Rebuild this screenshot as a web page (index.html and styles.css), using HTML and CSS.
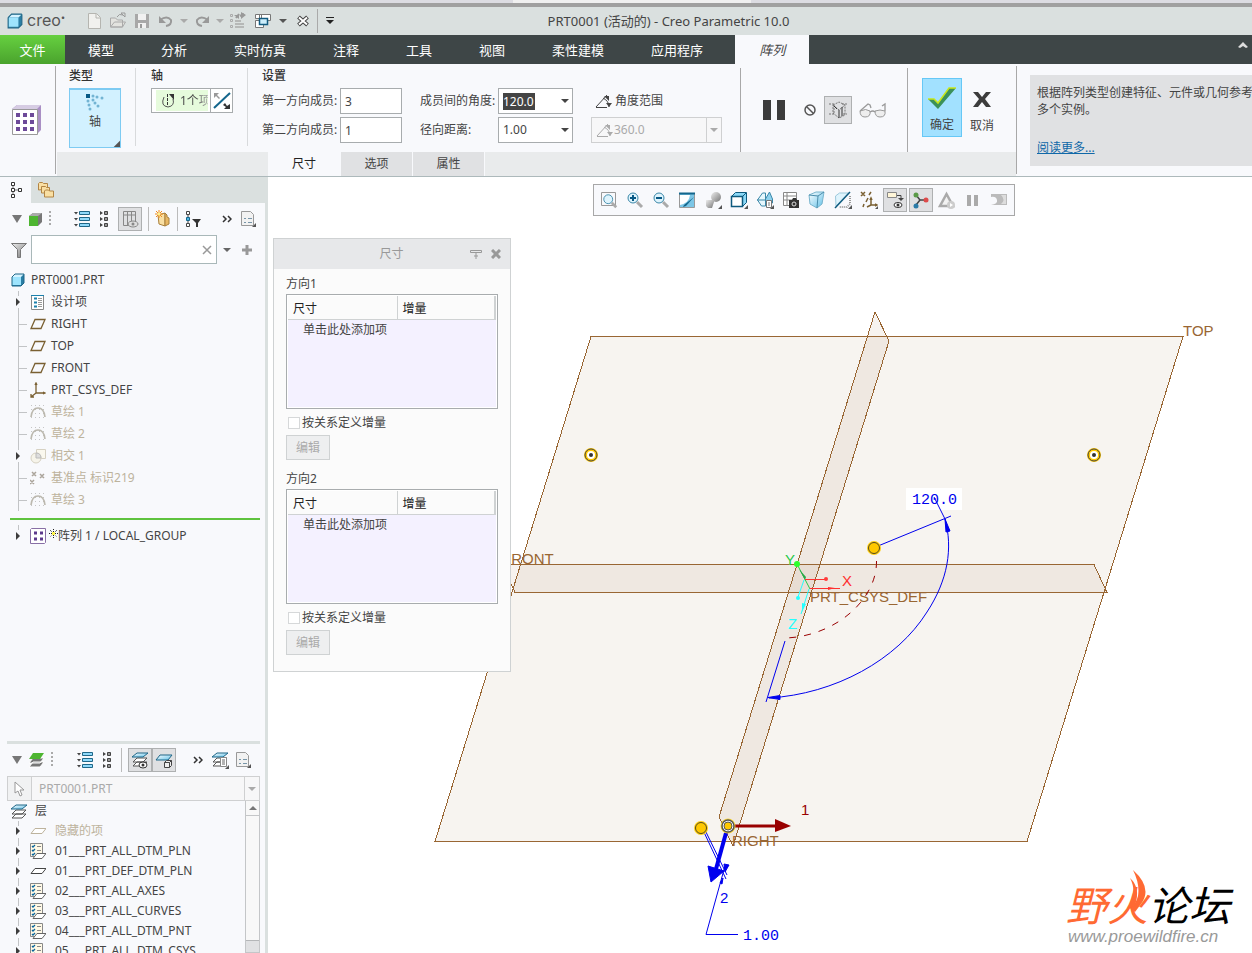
FILE: index.html
```html
<!DOCTYPE html>
<html lang="zh-CN">
<head>
  <meta charset="UTF-8" />
  <meta name="viewport" content="width=device-width, initial-scale=1.0"/>
  <title>PRT0001 (活动的) - Creo Parametric 10.0</title>
  <link rel="stylesheet" href="styles.css">
</head>
<body>
  <!-- shared icons -->
  <svg class="defs" width="0" height="0" aria-hidden="true">
    <linearGradient id="ice" x1="0" y1="0" x2="1" y2="1"><stop offset="0" stop-color="#fff"/><stop offset="1" stop-color="#5fc0e8"/></linearGradient>
    <linearGradient id="grayfade" x1="0" y1="0" x2="1" y2="1"><stop offset="0" stop-color="#eee"/><stop offset="1" stop-color="#777"/></linearGradient>
    <symbol id="i-part" viewBox="0 0 16 16"><path d="M2 5l3-3h9v9l-3 3H2z" fill="#2b7fa5"/><path d="M2 5l3-3h9l-3 3z" fill="#d5f3ff"/><path d="M2 5h9v8H2z" fill="#9ee4fd"/><path d="M2 5v9h9l3-3V2M2 5l3-3h9" fill="none" stroke="#1f6788"/></symbol>
    <symbol id="i-plane" viewBox="0 0 16 16"><path d="M5 3.5h10l-4 9H1z" fill="none" stroke="#7a6032" stroke-width="1.3"/></symbol>
    <symbol id="i-csys" viewBox="0 0 16 16"><path d="M6 1v10h9M6 11l-5 4M5 3l1-2 1 2M13 10l2 1-2 1M1 12v3h3" fill="none" stroke="#7a6032" stroke-width="1.3"/></symbol>
    <symbol id="i-sketch" viewBox="0 0 16 16"><path d="M1 1.5h14M1 5.5h14M1 9.5h14M1 13.5h14" stroke="#c5c5c5" stroke-dasharray="1 3"/><path d="M1 13q1-9 7-9t7 9" fill="none" stroke="#bbb8ae" stroke-width="1.6"/></symbol>
    <symbol id="i-expand" viewBox="0 0 16 16"><path d="M0 1h4L2 3.500zM0 7h4L2 9.500zM0 13h4L2 15.500z" fill="#444"/><path d="M5.500 .5h10v3h-10zM5.500 6.500h10v3h-10zM5.500 12.500h10v3h-10z" fill="#8fd9fa" stroke="#1f6788"/></symbol>
    <symbol id="i-collapse" viewBox="0 0 16 16"><path d="M4 0l3 2-3 2zM4 6l3 2-3 2zM4 12l3 2-3 2z" fill="#444"/><path d="M8.500 .5h3v3h-3zM8.500 6.500h3v3h-3zM8.500 12.500h3v3h-3z" fill="#999" stroke="#444"/></symbol>
    <symbol id="i-doc" viewBox="0 0 16 18"><path d="M1.500 1.500h9l3 3v11h-12z" fill="#f2f2f2" stroke="#999"/><path d="M4 8.500h2M4 12.500h2M8 8.500h4M8 12.500h4" stroke="#7795a8"/><path d="M16 13v4h-4z" fill="#555"/></symbol>
    <symbol id="i-layers" viewBox="0 0 18 16"><path d="M6 11h10l-4 4H2zM6 7h10l-4 4H2z" fill="#fff" stroke="#555"/><path d="M6 2h11l-5 4H1z" fill="url(#ice)" stroke="#1f6788"/></symbol>
    <symbol id="i-layerrow" viewBox="0 0 16 16"><path d="M.5 .5h12v13H.5z" fill="#fff9e6" stroke="#888"/><path d="M2 3l1 1 2-2M2 7l1 1 2-2M2 11l1 1 2-2" fill="none" stroke="#0a659c" stroke-width="1.3"/><path d="M7 3.500h4M7 7.500h4" stroke="#888"/><path d="M7 10.500h9l-4 5H3z" fill="#fff" stroke="#666"/></symbol>
    <symbol id="i-flat" viewBox="0 0 16 16"><path d="M5 5.500h11l-4 5H1z" fill="#fff" stroke="currentColor"/></symbol>
    <symbol id="i-down" viewBox="0 0 8 8"><path d="M0 2h8L4 6z" fill="currentColor"/></symbol>
    <symbol id="i-right" viewBox="0 0 6 8"><path d="M1 0l4 4-4 4z" fill="#3d3d3d"/></symbol>
    <symbol id="i-angle" viewBox="0 0 18 16"><path d="M1 14.500h11M1 14L12 2M8 5q6 3 6 9" fill="none" stroke="currentColor"/><path d="M9 3h5v5zM11 10h6l-3 4z" fill="currentColor"/></symbol>
    <symbol id="i-more" viewBox="0 0 10 8"><path d="M1 1l3 3-3 3M6 1l3 3-3 3" fill="none" stroke="#333" stroke-width="1.500"/></symbol>
    <symbol id="i-grip" viewBox="0 0 4 16"><path d="M1 0h2v2H1zM1 4h2v2H1zM1 8h2v2H1zM1 12h2v2H1z" fill="#aaa"/></symbol>
    <symbol id="i-lens" viewBox="0 0 18 18"><path d="M11 11l5 5" stroke="#aaa" stroke-width="3"/><circle cx="7" cy="7" r="5" fill="#dff4fd" stroke="#3a87a8"/></symbol>
  </svg>

  <div class="strip"></div>
  <header class="titlebar">
    <div class="logo"><svg width="16" height="16" viewBox="1 1 14 14"><use href="#i-part" width="16" height="16"/></svg><span>creo<sup>•</sup></span></div>
    <div class="quick">
      <button aria-label="新建"><svg width="16" height="18"><path d="M2.500 1.500h8l4 4v11h-12z" fill="#f1f1ee" stroke="#b5b5b0"/><path d="M10 2v4h4" fill="none" stroke="#b5b5b0"/></svg></button>
      <button aria-label="打开"><svg width="18" height="18"><path d="M1.500 15V6h5l2 2h5v7zM1.500 15l4-5h11l-3 5z" fill="#e3e3df" stroke="#aaa"/><path d="M8 5q2-4 6-2M12 1h4v4z" fill="none" stroke="#999"/></svg></button>
      <button aria-label="保存"><svg width="16" height="18"><path d="M1 2h14v14H1z" fill="#a8a8a8"/><path d="M4 2h8v6H4zM4 11h8v5H4z" fill="#f1f1f1"/><path d="M6 12h2v4H6z" fill="#999"/></svg></button>
      <button aria-label="撤消"><svg width="18" height="16"><path d="M3 7q7-5 11 0 1 5-5 6" fill="none" stroke="#999" stroke-width="2"/><path d="M2 3v7h7z" fill="#999"/></svg></button>
      <svg class="pale" width="8" height="8"><use href="#i-down"/></svg>
      <button aria-label="重做"><svg width="18" height="16"><path d="M15 7Q8 2 4 7q-1 5 5 6" fill="none" stroke="#999" stroke-width="2"/><path d="M16 3v7H9z" fill="#999"/></svg></button>
      <svg class="pale" width="8" height="8"><use href="#i-down"/></svg>
      <button aria-label="重新生成"><svg width="18" height="18"><path d="M1.500 2.500h2v2h-2zM1.500 7.500h2v2h-2zM1.500 13.500h2v2h-2z" fill="none" stroke="#aaa"/><path d="M6 9h6M6 12h9M6 15h9" stroke="#aaa" stroke-width="1.500"/><path d="M7 6l3-4M11 4l4-2" stroke="#999" stroke-width="2"/><path d="M5 3h5v4zM12 0l5 3-5 4z" fill="#999"/></svg></button>
      <button aria-label="窗口"><svg width="18" height="18"><path d="M5.500 2.500h11v6h-11zM1.500 8.500h8v7h-8zM1.500 2.500h6v4h-6z" fill="#fff" stroke="#777"/><path d="M5.500 6.500h8v6h-8z" fill="#cdeefb" stroke="#125b80" stroke-width="1.500"/></svg></button>
      <svg width="8" height="8"><use href="#i-down"/></svg>
      <button class="close-win" aria-label="关闭"><svg width="14" height="14"><path d="M2.500 3l9 8M11.500 3l-9 8" stroke="#444" stroke-width="4"/><path d="M3 3.500l8 7M11 3.500l-8 7" stroke="#fff" stroke-width="2"/></svg></button>
      <i class="sep"></i>
      <svg width="10" height="12"><path d="M1 2.500h8" stroke="#222"/><path d="M1 5h8L5 9z" fill="#222"/></svg>
    </div>
    <h1>PRT0001 (活动的) - Creo Parametric 10.0</h1>
  </header>

  <nav class="menu">
    <button class="file">文件</button>
    <button>模型</button>
    <button>分析</button>
    <button>实时仿真</button>
    <button>注释</button>
    <button>工具</button>
    <button>视图</button>
    <button>柔性建模</button>
    <button>应用程序</button>
    <button class="current">阵列</button>
    <svg class="fold" width="12" height="8"><path d="M1 6l5-5 5 5-2 1-3-2-3 2z" fill="#ddd"/></svg>
  </nav>

  <section class="ribbon">
    <div class="ribbon-icon">
      <svg width="32" height="32"><path d="M1 5l5-4h24v25l-4 4V5z" fill="#a98fc4"/><path d="M1 5l5-4h24l-4 4z" fill="#d6cce3"/><path d="M1.500 5.500h25v25h-25z" fill="#fff" stroke="#999"/><path d="M5 11h18M5 18h18M5 25h18" stroke="#6d4a99" stroke-width="4" stroke-dasharray="4 3"/></svg>
    </div>
    <div class="ribbon-body">
      <div class="groups">
        <div class="group type">
          <h2>类型</h2>
          <button class="type-btn"><svg width="20" height="20"><g fill="#73b4d3"><circle cx="8" cy="3" r="1.500"/><circle cx="12" cy="4" r="1.500"/><circle cx="17" cy="5" r="1.500"/><circle cx="3" cy="8" r="1.500"/><circle cx="8" cy="7" r="1.500"/><circle cx="10" cy="10" r="1.500"/><circle cx="13" cy="13" r="1.500"/><circle cx="4" cy="12" r="1.500"/><circle cx="5" cy="16" r="1.500"/></g><path d="M1 1h4v4H1z" fill="#075985"/></svg><span>轴</span></button>
        </div>
        <div class="group axis">
          <h2>轴</h2>
          <div class="collector">
            <button class="picked"><svg width="16" height="16"><path d="M4 4q-4 9 4 10 7-1 5-8" fill="none" stroke="#555"/><path d="M7.500 1v11" stroke="#333" stroke-dasharray="3 1"/><path d="M9 1h5v6z" fill="#333"/></svg><span>1个项</span></button>
            <button class="flip" aria-label="反向"><svg width="20" height="20"><path d="M2 17L18 2" stroke="#14668c" stroke-width="2"/><path d="M2 2h5L5 4l3 3-1 1-3-3-2 2z" fill="#999"/><path d="M18 18h-6l2-2-3-2 2-2 2 3 3-2z" fill="#333"/></svg></button>
          </div>
        </div>
        <div class="group settings">
          <h2>设置</h2>
          <div class="fields">
            <label for="m1">第一方向成员:</label><input id="m1" value="3">
            <label for="ang">成员间的角度:</label>
            <div class="combo"><input id="ang" value="120.0"><button aria-label="展开"><svg width="8" height="8"><use href="#i-down"/></svg></button></div>
            <button class="range"><svg width="18" height="16"><use href="#i-angle"/></svg>角度范围</button>
            <label for="m2">第二方向成员:</label><input id="m2" value="1">
            <label for="rad">径向距离:</label>
            <div class="drop"><select id="rad"><option>1.00</option></select><svg width="8" height="8"><use href="#i-down"/></svg></div>
            <div class="drop off"><svg width="18" height="16"><use href="#i-angle"/></svg><select aria-label="角度范围" disabled><option>360.0</option></select><i></i><svg width="8" height="8"><use href="#i-down"/></svg></div>
          </div>
        </div>
        <div class="group control">
          <button aria-label="暂停"><svg width="24" height="24"><path d="M1 2h8v20H1zM15 2h8v20h-8z" fill="#3c3c3c"/></svg></button>
          <button aria-label="无预览"><svg width="14" height="14"><circle cx="7" cy="7" r="5" fill="none" stroke="#555" stroke-width="1.500"/><path d="M3.500 3.500l7 7" stroke="#555" stroke-width="1.500"/></svg></button>
          <button class="pressed" aria-label="特征预览"><svg width="20" height="20"><g fill="none" stroke="#777"><path d="M1 4h5v10H1M5 5l6-3 6 3v10l-6 3-6-5zM5 5l6 5 6-5M14 4h5M15 14h4" stroke-dasharray="2 1"/><path d="M6 6l3 3M11 10v8M14 7v9" stroke="#333"/></g></svg></button>
          <button aria-label="检查"><svg width="28" height="20"><path d="M1 11q6-3 10 0 1 6-5 6-5 0-5-6zM16 11q5-2 10 0 1 6-5 6-5 0-5-6z" fill="#eee" stroke="#999"/><path d="M1 11l8-7 2 1 1 3M11 12q3-2 5 0M26 11V4l-3 2" fill="none" stroke="#999" stroke-width="1.300"/></svg></button>
        </div>
        <div class="group finish">
          <button class="ok"><svg width="30" height="24"><path d="M1 12h6l4 4L22 1h7L11 22z" fill="#3b915a"/><path d="M1 12h6l4 4L22 1h7" fill="none" stroke="#c8e61a" stroke-width="1.500"/></svg>确定</button>
          <button class="cancel"><svg width="20" height="24"><path d="M1 4h5l4 5 4-5h5l-6 7 6 8h-5l-4-5-4 5H1l6-8z" fill="#3c3c3c"/></svg>取消</button>
        </div>
      </div>
      <div class="subtabs">
        <button class="on">尺寸</button>
        <button>选项</button>
        <button>属性</button>
      </div>
    </div>
    <aside class="help">
      <div>
        <p>根据阵列类型创建特征、元件或几何参考<br>多个实例。</p>
        <a href="#more">阅读更多...</a>
      </div>
    </aside>
  </section>

  <main>
    <aside class="side">
      <div class="side-tabs">
        <button class="on" aria-label="模型树"><svg width="14" height="18"><path d="M3 4v10M3 9h6" stroke="#777"/><path d="M1.500 1.500h3v3h-3zM1.500 7.500h3v3h-3zM1.500 13.500h3v3h-3zM8.500 7.500h3v3h-3z" fill="#fff" stroke="#333"/></svg></button>
        <button aria-label="文件夹"><svg width="18" height="18"><g fill="#f9dfa3" stroke="#b28545"><path d="M1.500 9V2.500l1-1h3l1 1h4V8z"/><path d="M4.500 12V5.500h4l1 1h3V12z"/><path d="M7.500 16V10l1-1h3l1 1h4v6z"/></g></svg></button>
      </div>
      <div class="tools">
        <svg class="mid" width="10" height="10"><path d="M0 1h10L5 9z" fill="#777"/></svg>
        <svg width="15" height="16"><path d="M1 5l4-3h9v9l-4 4V5z" fill="#777"/><path d="M1 5l4-3h9l-4 3z" fill="#aaa"/><path d="M1 5h9v10H1z" fill="#4eb531"/></svg>
        <svg class="grip" width="4" height="16"><use href="#i-grip"/></svg>
        <button aria-label="全部展开"><svg width="16" height="16"><use href="#i-expand"/></svg></button>
        <button aria-label="全部折叠"><svg width="16" height="16"><use href="#i-collapse"/></svg></button>
        <button class="pressed" aria-label="列"><svg width="18" height="18"><path d="M2.500 1.500h12v14h-12zM2 5h12M6.500 2v13M10.500 2v13" fill="none" stroke="#888"/><ellipse cx="12" cy="14" rx="5" ry="3" fill="#ddd" stroke="#888"/><circle cx="12" cy="14" r="1.500" fill="#888"/></svg></button>
        <i class="sep"></i>
        <button aria-label="样式"><svg width="16" height="18"><path d="M3 5l7-2v13l-6-2z" fill="#f9dfa3" stroke="#a9803c"/><path d="M10 3l2 2v2l2 1v6l-4 2z" fill="#e8b763" stroke="#a9803c"/><path d="M4 0v8M0 4h8M1 1l6 6M7 1L1 7" stroke="#f08a1d"/><circle cx="4" cy="4" r="1.500" fill="#fff38a"/></svg></button>
        <i class="sep"></i>
        <button aria-label="树过滤器"><svg width="18" height="18"><path d="M4 4v10" stroke="#444"/><path d="M2.500 1.500h3v3h-3zM2.500 13.500h3v3h-3z" fill="#fff" stroke="#444"/><path d="M2.500 7.500h3v3h-3z" fill="#4fb7e4" stroke="#14668c"/><path d="M8 9h9l-3 4v4h-2v-4z" fill="#333"/></svg></button>
        <button class="more" aria-label="更多"><svg width="10" height="8"><use href="#i-more"/></svg></button>
        <button aria-label="设置"><svg width="16" height="18"><use href="#i-doc"/></svg></button>
      </div>
      <div class="filter">
        <svg width="18" height="18"><path d="M1.500 2.500h15l-6 6v8h-3v-8z" fill="url(#grayfade)" stroke="#777"/></svg>
        <div class="search"><input aria-label="过滤"><svg width="10" height="10"><path d="M1 1l8 8M9 1L1 9" stroke="#999" stroke-width="1.500"/></svg></div>
        <svg class="mid" width="8" height="8"><use href="#i-down"/></svg>
        <svg width="12" height="12"><path d="M6 1v10M1 6h10" stroke="#999" stroke-width="3"/></svg>
      </div>

      <ul class="tree">
        <li class="root"><svg width="16" height="16"><use href="#i-part"/></svg>PRT0001.PRT</li>
        <li class="first"><span class="tw"><svg width="6" height="8"><use href="#i-right"/></svg></span><svg width="16" height="16"><path d="M1.500 1.500h12v14h-12z" fill="#fff" stroke="#888"/><path d="M1 1.500h13" stroke="#1b80ac"/><path d="M4 4.500h3M4 8.500h3M4 12.500h3" stroke="#1b80ac" stroke-width="2"/><path d="M8 4.500h4M8 8.500h4M8 12.500h4M8 6.500h4M8 10.500h4" stroke="#999"/></svg>设计项</li>
        <li><span class="tw"></span><svg width="16" height="16"><use href="#i-plane"/></svg>RIGHT</li>
        <li><span class="tw"></span><svg width="16" height="16"><use href="#i-plane"/></svg>TOP</li>
        <li><span class="tw"></span><svg width="16" height="16"><use href="#i-plane"/></svg>FRONT</li>
        <li><span class="tw"></span><svg width="16" height="16"><use href="#i-csys"/></svg>PRT_CSYS_DEF</li>
        <li class="dim"><span class="tw"></span><svg width="16" height="16"><use href="#i-sketch"/></svg>草绘 1</li>
        <li class="dim"><span class="tw"></span><svg width="16" height="16"><use href="#i-sketch"/></svg>草绘 2</li>
        <li class="dim exp"><span class="tw"><svg width="6" height="8"><use href="#i-right"/></svg></span><svg width="16" height="16"><path d="M6.500 1.500h9v9h-9z" fill="#faf8ee" stroke="#d6d1c2"/><circle cx="6" cy="10" r="5" fill="#f6f4ea" stroke="#d6d1c2"/><path d="M6 5q5 0 5 5H6z" fill="#ddd" stroke="#bbb"/></svg>相交 1</li>
        <li class="dim"><span class="tw"></span><svg width="16" height="16"><path d="M2 2l4 4M6 2L2 6M10 4l4 4M14 4l-4 4M0 10l4 4M4 10l-4 4" stroke="#aaa49a" stroke-width="1.500"/></svg>基准点 标识219</li>
        <li class="dim"><span class="tw"></span><svg width="16" height="16"><use href="#i-sketch"/></svg>草绘 3</li>
        <li class="insert"></li>
        <li class="last"><span class="tw"><svg width="6" height="8"><use href="#i-right"/></svg></span><svg width="16" height="16"><path d="M.5 1.500l1-1h14v14l-1 1H.5z" fill="#fff" stroke="#886fa5"/><path d="M4 5h9M4 11h9" stroke="#5d3a8c" stroke-width="3" stroke-dasharray="3 3"/></svg><svg class="star" width="9" height="9"><path d="M4.500 0v9M0 4.500h9M1 1l7 7M8 1L1 8" stroke="#222" stroke-dasharray="1 1"/><path d="M3 3h3v3H3z" fill="#fff34d"/></svg>阵列 1 / LOCAL_GROUP</li>
      </ul>

      <section class="layers">
        <div class="tools">
          <svg class="mid" width="10" height="10"><path d="M0 1h10L5 9z" fill="#777"/></svg>
          <svg width="17" height="16"><path d="M5 10h11l-4 5H1zM5 6h11l-4 5H1z" fill="#777" stroke="#fff"/><path d="M5 1h11l-4 6H1z" fill="#4eb531"/></svg>
          <svg class="grip" width="4" height="16"><use href="#i-grip"/></svg>
          <button aria-label="全部展开"><svg width="16" height="16"><use href="#i-expand"/></svg></button>
          <button aria-label="全部折叠"><svg width="16" height="16"><use href="#i-collapse"/></svg></button>
          <i class="sep"></i>
          <span class="pair">
            <button class="pressed" aria-label="显示层"><svg width="18" height="18"><use href="#i-layers" height="16"/><ellipse cx="12" cy="14" rx="4" ry="3" fill="#fff" stroke="#333"/><circle cx="12" cy="14" r="1.500" fill="#333"/></svg></button><button class="pressed" aria-label="层项"><svg width="18" height="18"><path d="M5 4h12l-4 5H1z" fill="url(#ice)" stroke="#1f6788"/><path d="M9.500 11.500h5v5h-5zM9.500 11.500l2-2h5v5l-2 2M14.500 11.500l2-2" fill="#eee" stroke="#444"/></svg></button>
          </span>
          <button class="more" aria-label="更多"><svg width="10" height="8"><use href="#i-more"/></svg></button>
          <button aria-label="层"><svg width="18" height="18"><use href="#i-layers" height="16"/><path d="M9.500 6.500h6v9h-6z" fill="#fff" stroke="#888"/><path d="M11 9h3M11 11h3M11 13h3" stroke="#666"/><path d="M18 14v4h-4z" fill="#555"/></svg></button>
          <button aria-label="设置"><svg width="16" height="18"><use href="#i-doc"/></svg></button>
        </div>
        <div class="picker">
          <button aria-label="选择"><svg width="12" height="16"><path d="M2 1v11l3-2 2 5 2-1-2-5h4z" fill="#fff" stroke="#999"/></svg></button>
          <div class="drop off"><select aria-label="模型" disabled><option>PRT0001.PRT</option></select><i></i><svg width="8" height="8"><use href="#i-down"/></svg></div>
        </div>
        <div class="layer-box">
          <ul class="tree layer-tree">
            <li class="root"><svg width="18" height="16"><use href="#i-layers"/></svg>层</li>
            <li class="dim exp"><span class="tw"><svg width="6" height="8"><use href="#i-right"/></svg></span><svg width="16" height="16"><use href="#i-flat"/></svg>隐藏的项</li>
            <li class="exp"><span class="tw"><svg width="6" height="8"><use href="#i-right"/></svg></span><svg width="16" height="16"><use href="#i-layerrow"/></svg>01___PRT_ALL_DTM_PLN</li>
            <li class="exp"><span class="tw"><svg width="6" height="8"><use href="#i-right"/></svg></span><svg width="16" height="16"><use href="#i-flat"/></svg>01___PRT_DEF_DTM_PLN</li>
            <li class="exp"><span class="tw"><svg width="6" height="8"><use href="#i-right"/></svg></span><svg width="16" height="16"><use href="#i-layerrow"/></svg>02___PRT_ALL_AXES</li>
            <li class="exp"><span class="tw"><svg width="6" height="8"><use href="#i-right"/></svg></span><svg width="16" height="16"><use href="#i-layerrow"/></svg>03___PRT_ALL_CURVES</li>
            <li class="exp"><span class="tw"><svg width="6" height="8"><use href="#i-right"/></svg></span><svg width="16" height="16"><use href="#i-layerrow"/></svg>04___PRT_ALL_DTM_PNT</li>
            <li class="exp"><span class="tw"><svg width="6" height="8"><use href="#i-right"/></svg></span><svg width="16" height="16"><use href="#i-layerrow"/></svg>05___PRT_ALL_DTM_CSYS</li>
          </ul>
          <div class="scroll"><button aria-label="向上"><svg width="8" height="6"><path d="M0 5h8L4 1z" fill="#777"/></svg></button><i></i></div>
        </div>
      </section>
    </aside>

    <section class="view">
      <svg class="scene">
        <g transform="translate(-268 -177)">
          <g class="planes">
            <path class="top" d="M591 336.500H1183L1027 841.500H435z"/>
            <path d="M875 312L889 341L733 846L719 817z"/>
            <path d="M502 564.500H1094L1107 592.500H515z"/>
          </g>
          <g class="cad brown">
            <text x="1183" y="336">TOP</text>
            <text x="502" y="564">FRONT</text>
            <text x="732" y="846">RIGHT</text>
            <text x="810" y="602">PRT_CSYS_DEF</text>
          </g>

          <!-- coordinate system -->
          <path d="M797 564l13 25" stroke="#28c84a"/><path d="M799 569l7 8-1 3z" fill="#28a848"/><circle cx="797" cy="564" r="3" fill="#2cff2c"/>
          <path d="M805 579.500h20M810 588.500h30" stroke="#ff3030"/><circle cx="826" cy="579" r="2" fill="#ff3b3b"/><path d="M828 587l7 1-7 2z" fill="#ff3030"/>
          <path d="M804 580l-6 17M809 589l-8 25" fill="none" stroke="#2ff"/><circle cx="798" cy="598" r="2" fill="#2ff"/><path d="M802 603l4 1-4 8z" fill="#2ff"/>
          <text class="cad" x="785" y="565" fill="#28c84a">Y</text>
          <text class="cad" x="842" y="586" fill="#ff3030">X</text>
          <text class="cad" x="788" y="629" fill="#2ff">Z</text>

          <!-- angular dimension -->
          <path class="swing" d="M876.500 561C877 600 835 636 786 638"/>
          <path fill="#fff" d="M906 488h56v22h-56z"/>
          <text class="num" x="912" y="504">120.0</text>
          <g class="dimline">
            <path d="M934 497l11 22M878 546L951 516M785 641L766 702"/>
            <path d="M945 519C953 548 948 580 927 612C897 660 835 694 769 698"/>
            <path d="M945 519l5 12-4 1zM768 697.500l12-2v4z" fill="#00e"/>
          </g>

          <!-- direction handles -->
          <path d="M735 826h42" stroke="#900" stroke-width="3"/><path d="M775 819l16 7-16 6z" fill="#900"/>
          <text class="cad" x="801" y="815" fill="#900">1</text>
          <g class="dimline">
            <path d="M702 828l24 51M704 828l23 47M725 866L706 934.500M706 934.500h32"/>
            <path d="M724 864l5 1-4 7zM723 878l-1 6-2-1z" fill="#00e"/>
            <path d="M726 833l-10 36" stroke-width="4"/><path d="M708 866l16 5-13 11z" fill="#00e"/>
          </g>
          <text class="cad" x="720" y="903" fill="#00e">2</text>
          <text class="num" x="743" y="940">1.00</text>

          <g class="points">
            <g id="pt"><circle cx="591" cy="455" r="7" fill="#ffc800"/><circle cx="591" cy="455" r="6" fill="#ffc800" stroke="#444"/><circle cx="591" cy="455" r="4" fill="#fff"/><circle cx="591" cy="455" r="2" fill="#333"/></g>
            <use href="#pt" x="503"/>
            <g id="knob"><circle cx="874" cy="548" r="7" fill="#ffcf10"/><circle cx="874" cy="548" r="5.500" fill="#ffc800" stroke="#554a20"/></g>
            <use href="#knob" x="-173" y="280"/>
            <circle cx="728" cy="826" r="7.500" fill="#ffd830"/><circle cx="728" cy="826" r="6" fill="#fff" stroke="#555" stroke-width="1.500"/><circle cx="728" cy="826" r="4" fill="#ffc800" stroke="#555"/>
          </g>
        </g>
      </svg>

      <div class="viewbar">
        <button aria-label="重新调整"><svg width="18" height="18"><path d="M1.500 1.500h14v13h-14z" fill="none" stroke="#999"/><use href="#i-lens" x="2" y="2" width="16" height="16"/></svg></button>
        <button aria-label="放大"><svg width="18" height="18"><use href="#i-lens"/><path d="M4 7h6M7 4v6" stroke="#075985" stroke-width="2"/></svg></button>
        <button aria-label="缩小"><svg width="18" height="18"><use href="#i-lens"/><path d="M4 7h6" stroke="#075985" stroke-width="2"/></svg></button>
        <button aria-label="重画"><svg width="18" height="18"><path d="M1.500 2.500h15v14h-15z" fill="#7cc6e6" stroke="#999"/><path d="M2 4h10q-1 8-10 10z" fill="#fff"/><path d="M1 2.500h16" stroke="#14668c" stroke-width="2"/><path d="M16 6L6 14l-1 2 3-1z" fill="#14668c"/></svg></button>
        <button aria-label="渲染"><svg width="18" height="18"><circle cx="12" cy="6" r="5" fill="url(#grayfade)"/><path d="M2 9h8v2l-2 6H4l-2-2z" fill="url(#grayfade)"/><path d="M18 14v4h-4z" fill="#555"/></svg></button>
        <button aria-label="显示样式"><svg width="18" height="18"><path d="M1.500 5.500l4-4h11v10l-4 4h-11z" fill="#8bd8f7" stroke="#0e5a7e"/><path d="M1.500 5.500h11v10h-11z" fill="#fff" stroke="#0e5a7e" stroke-width="1.500"/><path d="M12 6l4-4" stroke="#0e5a7e"/><path d="M18 14v4h-4z" fill="#555"/></svg></button>
        <button aria-label="已保存方向"><svg width="18" height="18"><path d="M1.500 9l5-7h3v13h-4z" fill="#e6f7fd" stroke="#3a87a8"/><path d="M1 9h9M9.500 8l4-7 3 7v4h-7z" fill="#8ed2ee" stroke="#3a87a8"/><path d="M10.500 9.500h5v7h-5z" fill="#fff" stroke="#777"/><path d="M12 12h2M12 14h2" stroke="#777"/><path d="M18 14v4h-4z" fill="#555"/></svg></button>
        <button aria-label="视图管理器"><svg width="18" height="18"><path d="M1.500 1.500h13v13h-13zM1 5h14M1 9h14M5 1v14" fill="#fff" stroke="#888"/><path d="M7 9h3l1-2h3l1 2h2v8H7z" fill="#333"/><circle cx="12" cy="13" r="2" fill="#333" stroke="#ddd"/></svg></button>
        <button aria-label="透视图"><svg width="18" height="18"><path d="M1 4l7-3h8l-2 12-5 4-7-4z" fill="url(#ice)" stroke="#78b4cd"/><path d="M1 4l9 1 6-4M10 5L9 17" fill="none" stroke="#4b8dab"/></svg></button>
        <button aria-label="截面"><svg width="18" height="18"><path d="M1.500 5l4-3h9L2 15z" fill="#dff4fd" stroke="#9cc9dc"/><path d="M16 5v8l-3 3H5" fill="none" stroke="#999" stroke-dasharray="1 1" stroke-width="2"/><path d="M1 17L16 1" stroke="#0e5a7e" stroke-width="1.500"/><path d="M18 14v4h-4z" fill="#555"/></svg></button>
        <button aria-label="基准显示"><svg width="18" height="18"><path d="M1 1l4 4M5 1L1 5M11 1L9 4M8 7l-2 4M4 13l-1 3M11 7v7h6M11 14l-4 2M10 9l1-2 1 2M15 13l2 1-2 1" fill="none" stroke="#7a6032" stroke-width="1.500"/><path d="M18 15v3h-3z" fill="#555"/></svg></button>
        <button class="pressed" aria-label="注释显示"><svg width="18" height="18"><path d="M1.500 1.500h9v5h-9z" fill="#fff6d8" stroke="#888"/><path d="M11 4.500h4v3" fill="none" stroke="#444"/><path d="M12 7h6l-3 3z" fill="#444"/><ellipse cx="12" cy="14" rx="4" ry="2.500" fill="#fff" stroke="#333"/><circle cx="12" cy="14" r="1.500" fill="#333"/></svg></button>
        <button class="pressed" aria-label="旋转中心"><svg width="18" height="18"><path d="M4 4l4 5h6M8 9l-4 5" fill="none" stroke="#444" stroke-width="1.500"/><circle cx="4" cy="4" r="2.500" fill="#5a9a48"/><circle cx="14" cy="9" r="2.500" fill="#dd4b4b"/><circle cx="4" cy="15" r="2.500" fill="#2a7ba8"/></svg></button>
        <button aria-label="仿真"><svg width="18" height="18"><path d="M8.500 3l6.500 12H2z" fill="#f2f2f2" stroke="#aaa" stroke-width="2.500"/><circle cx="13" cy="14" r="4" fill="#ccc"/><path d="M12 12l3 2-3 2z" fill="#fff"/></svg></button>
        <button aria-label="暂停"><svg width="18" height="18"><path d="M3 4h4v11H3zM10 4h4v11h-4z" fill="#aaa"/></svg></button>
        <button aria-label="结果"><svg width="18" height="18"><path d="M1 3h16v11H1q7-1 6-5-1-4-6-3z" fill="#bbb"/><path d="M11 4q5 5 0 9h5V4z" fill="#ddd"/></svg></button>
      </div>

      <div class="dialog">
        <header><span>尺寸</span><svg width="14" height="12"><path d="M1.500 2.500h11v2h-11zM7 5v6M5 8h4" fill="none" stroke="#999"/></svg><svg width="10" height="10"><path d="M1 1l8 8M9 1L1 9" stroke="#999" stroke-width="3"/></svg></header>
        <div class="dir">
          <h3>方向1</h3>
          <div class="table-box"><table>
            <tr><th>尺寸</th><th>增量</th></tr>
            <tr><td colspan="2">单击此处添加项</td></tr>
          </table></div>
          <label><input type="checkbox" disabled>按关系定义增量</label>
          <button disabled>编辑</button>
        </div>
        <div class="dir">
          <h3>方向2</h3>
          <div class="table-box"><table>
            <tr><th>尺寸</th><th>增量</th></tr>
            <tr><td colspan="2">单击此处添加项</td></tr>
          </table></div>
          <label><input type="checkbox" disabled>按关系定义增量</label>
          <button disabled>编辑</button>
        </div>
      </div>

      <div class="mark">
        <div class="mark-name"><b>野火</b>论坛</div>
        <div class="mark-url">www.proewildfire.cn</div>
        <svg width="24" height="44"><path d="M6 1q20 18 8 34l-6 8-5-4q6-4 8-12 2-12-5-26z" fill="#ff6a33"/><path d="M3 9q11 10 5 27l-5 3Q10 22 3 9z" fill="#ff6a33"/></svg>
      </div>
    </section>
  </main>
</body>
</html>
```

FILE: styles.css
```css
* {
  box-sizing: border-box;
}

body {
  margin: 0;
  height: 100vh;
  overflow: hidden;
  display: flex;
  flex-direction: column;
  font: 12px/16px "Noto Sans", "Noto Sans CJK SC", sans-serif;
  color: #444;
  background: #fff;
}

button, input, select {
  font: inherit;
  color: inherit;
}

button {
  padding: 0;
  border: 0;
  background: none;
}

h1, h2, h3, p, ul {
  margin: 0;
  padding: 0;
  font-size: 12px;
  font-weight: normal;
}

svg {
  display: block;
  flex: none;
}

.defs {
  position: absolute;
}

/* title bar */
.strip {
  height: 7px;
  flex: none;
  background: linear-gradient(90deg, #dcdce2 41%, #f0f0f0 41% 60%, #dcdce2 60%);
  border-bottom: 4px solid #a0a0a0;
}

.titlebar {
  height: 28px;
  flex: none;
  display: flex;
  align-items: center;
  padding: 0 250px 0 7px;
  background: #dae0df;
}

.logo {
  display: flex;
  align-items: center;
  gap: 4px;
  width: 79px;
  font: 16px/18px Inter, sans-serif;
  color: #555;
}

.logo span {
  padding-bottom: 2px;
}

.logo sup {
  font-size: 8px;
  line-height: 0;
}

.quick {
  display: flex;
  align-items: center;
  gap: 7px;
  color: #555;
}

.quick .pale {
  margin: 0 -2px;
  color: #aaa;
}

.quick .sep {
  width: 1px;
  height: 24px;
  background: #aaa;
}

.close-win {
  margin-left: 2px;
}

.titlebar h1 {
  flex: 1;
  text-align: center;
  font-size: 13px;
}

/* menu */
.menu {
  height: 29px;
  flex: none;
  display: flex;
  gap: 1px;
  background: #3e4647;
  color: #fff;
  font-size: 13px;
}

.menu button {
  padding: 0 23px;
}

.menu .file {
  width: 65px;
  margin-right: -1px;
  padding: 0;
  background: linear-gradient(#66d040, #4aa32d);
}

.menu .current {
  margin-left: 8px;
  padding: 0 24px;
  background: #f8f9fc;
  color: #444;
  font-style: italic;
}

.menu .fold {
  margin: 6px 3px 0 auto;
}

/* ribbon */
.ribbon {
  height: 113px;
  flex: none;
  display: flex;
  background: #f8f9fc;
  border-bottom: 1px solid #adb9bb;
}

.ribbon-icon {
  width: 56px;
  margin: 2px 1px 2px 0;
  padding: 38px 0 0 11px;
  border-right: 1px solid #a8a8a8;
}

.ribbon-body {
  width: 959px;
  display: flex;
  flex-direction: column;
}

.groups {
  height: 88px;
  display: flex;
  padding-top: 4px;
}

.group {
  height: 78px;
  padding-left: 14px;
  border-right: 1px solid #d8dadc;
}

.group h2 {
  line-height: 16px;
  margin-bottom: 4px;
  font-weight: 500;
  color: #333;
}

.group.type {
  width: 79px;
  padding-left: 12px;
}

.type-btn {
  width: 52px;
  height: 60px;
  display: flex;
  flex-direction: column;
  align-items: center;
  gap: 1px;
  padding-top: 3px;
  border: 1px solid #7ecbf2;
  border-top-width: 2px;
  background: linear-gradient(315deg, #555 4px, #d2f1ff 5px);
}

.group.axis {
  width: 112px;
  padding-left: 15px;
}

.collector {
  width: 82px;
  height: 25px;
  display: flex;
  border: 1px solid #a8acae;
  background: #fff;
}

.picked {
  width: 52px;
  margin: 1px 2px 1px 4px;
  padding-left: 4px;
  display: flex;
  align-items: center;
  gap: 4px;
  overflow: hidden;
  white-space: nowrap;
  background: #e6fbdc;
}

.picked span {
  background: linear-gradient(90deg, #444 50%, #ccc);
  background-clip: text;
  color: transparent;
}

.flip {
  flex: 1;
  padding-left: 1px;
  border-left: 1px solid #a8acae;
}

.group.settings {
  width: 493px;
  height: 84px;
  border-right-color: #a8a8a8;
}

.fields {
  display: grid;
  grid-template-columns: 78px 80px 78px 93px 131px;
  grid-auto-rows: 26px;
  row-gap: 3px;
  align-items: center;
}

.fields label {
  white-space: nowrap;
}

.fields > input {
  width: 62px;
  height: 26px;
  padding: 0 4px;
  border: 1px solid #a8acae;
  background: #fff;
}

.combo, .drop {
  width: 75px;
  height: 26px;
  display: flex;
  align-items: center;
  padding: 0 3px 0 4px;
  border: 1px solid #a8acae;
  background: #fff;
}

.combo input {
  width: 32px;
  height: 17px;
  margin-right: auto;
  padding: 0;
  border: 0;
  background: #444;
  color: #fff;
}

.drop select {
  flex: 1;
  min-width: 0;
  padding: 0;
  border: 0;
  appearance: none;
  background: none;
  opacity: 1;
}

.drop.off {
  width: 131px;
  border-color: #cfd0d1;
  background: #f7f7f8;
  color: #aaa;
}

.drop.off i {
  width: 1px;
  height: 24px;
  margin-right: 3px;
  background: #cfd0d1;
}

.range {
  display: flex;
  align-items: center;
  gap: 2px;
  padding-left: 4px;
}

.group.control {
  width: 167px;
  height: 84px;
  display: flex;
  align-items: center;
  gap: 7px;
  padding-left: 21px;
  border-right-color: #a8a8a8;
}

.group.control button:first-child {
  margin-right: 10px;
}

.pressed {
  padding: 3px;
  border: 1px solid #aeb0b1;
  background: #dfe0e2;
}

.group.finish {
  display: flex;
  gap: 8px;
  padding-top: 10px;
  border: 0;
}

.finish button {
  height: 59px;
  display: flex;
  flex-direction: column;
  align-items: center;
  justify-content: flex-end;
  gap: 6px;
  padding-bottom: 3px;
}

.finish .ok {
  width: 40px;
  border: 1px solid #66c8f6;
  background: #a2e1ff;
}

.subtabs {
  flex: 1;
  display: flex;
  gap: 1px;
  padding-left: 211px;
  background: #e9ebec;
}

.subtabs button {
  width: 71px;
  background: #e0e1e3;
  box-shadow: 1px 0 #f8f9fc;
}

.subtabs .on {
  width: 72px;
  background: #f8f9fc;
  color: #222;
}

.help {
  flex: 1;
  min-width: 0;
  margin: 2px 0;
  padding: 9px 0 0 13px;
  border-left: 1px solid #a8a8a8;
  overflow: hidden;
  white-space: nowrap;
}

.help div {
  height: 91px;
  padding: 9px 0 9px 7px;
  background: #e0e1e3;
}

.help p {
  line-height: 17px;
  margin-bottom: 22px;
}

.help a {
  color: #1068a8;
}

/* side pane */
main {
  flex: 1;
  min-height: 0;
  display: flex;
}

.side {
  width: 268px;
  display: flex;
  flex-direction: column;
  border-right: 3px solid #dae0df;
  background: #f8f9fc;
}

.side-tabs {
  height: 26px;
  flex: none;
  display: flex;
  background: #dae0df;
}

.side-tabs button {
  width: 31px;
  padding: 0 0 0 10px;
}

.side-tabs button:last-child {
  padding-left: 6px;
}

.side-tabs .on {
  background: #f8f9fc;
}

.tools {
  height: 32px;
  flex: none;
  display: flex;
  align-items: center;
  gap: 6px;
  padding-left: 12px;
}

.tools .sep {
  width: 1px;
  height: 24px;
  background: #bbb;
}

.tools .pressed {
  padding: 2px;
}

.tools .grip {
  margin: 0 16px 0 -1px;
}

.tools .more {
  margin: 0 2px 0 14px;
}

.mid {
  color: #666;
}

.filter {
  height: 29px;
  flex: none;
  display: flex;
  align-items: center;
  padding-left: 10px;
  gap: 6px;
}

.search {
  width: 186px;
  height: 29px;
  margin-left: -3px;
  display: flex;
  align-items: center;
  padding-right: 4px;
  border: 1px solid #a9b8b9;
  background: #fff;
}

.search input {
  flex: 1;
  min-width: 0;
  border: 0;
  background: none;
}

.filter .mid {
  margin-right: 4px;
}

.tree {
  flex: 1;
  min-height: 0;
  padding-top: 5px;
  overflow: hidden;
  list-style: none;
  white-space: nowrap;
}

.tree li {
  height: 22px;
  display: flex;
  align-items: center;
  padding-left: 14px;
  background:
    linear-gradient(#c2c4c6, #c2c4c6) 18px 0 / 1px 100% no-repeat,
    linear-gradient(#c2c4c6, #c2c4c6) 18px 11px / 9px 1px no-repeat;
}

.tree li svg + svg {
  margin-left: -2px;
}

.tw {
  width: 16px;
  padding-left: 1px;
}

.tw + svg {
  margin-right: 5px;
}

.tree .root {
  gap: 5px;
  padding-left: 10px;
  background: none;
}

.tree .exp, .tree .first {
  background:
    linear-gradient(#c2c4c6, #c2c4c6) 18px 0 / 1px 5px no-repeat,
    linear-gradient(#c2c4c6, #c2c4c6) 18px 17px / 1px 5px no-repeat;
}

.tree .last {
  background: linear-gradient(#c2c4c6, #c2c4c6) 18px 0 / 1px 5px no-repeat;
}

.tree .last .star {
  align-self: flex-start;
  margin-top: 4px;
}

.dim {
  color: #bdb39d;
}

.tree .insert {
  height: 2px;
  margin: 7px 5px 5px 10px;
  background: #5fc33f;
}

.layers {
  height: 212px;
  flex: none;
  display: flex;
  flex-direction: column;
  margin: 0 5px 0 7px;
  border-top: 3px solid #dae0df;
}

.layers .tools {
  padding-left: 5px;
}

.layers .tools .grip {
  margin-right: 17px;
}

.layers .tools .more {
  margin: 0 2px 0 11px;
}

.pair {
  display: flex;
}

.picker {
  height: 25px;
  flex: none;
  display: flex;
}

.picker button {
  width: 24px;
  padding-left: 5px;
  border: 1px solid #cfd0d1;
  border-right: 0;
  background: #f1f2f3;
}

.picker .drop.off {
  flex: 1;
  height: 25px;
  padding-left: 7px;
}

.layer-box {
  flex: 1;
  min-height: 0;
  display: flex;
}

.layer-tree {
  margin-left: -7px;
  padding-top: 0;
}

.layer-tree li {
  height: 20px;
}

.layer-tree .tw + svg {
  margin-right: 9px;
}

.layer-tree .root {
  gap: 7px;
}

.scroll {
  width: 15px;
  display: flex;
  flex-direction: column;
  background: #e0e1e3;
  border: 1px solid #c4c6c8;
  border-top: 0;
}

.scroll button {
  height: 15px;
  padding-left: 3px;
  border-bottom: 1px solid #c4c6c8;
  background: #f8f8f8;
}

.scroll i {
  height: 125px;
  background: #f8f8f8;
  border-bottom: 1px solid #b4b6b8;
}

/* graphics area */
.view {
  flex: 1;
  min-width: 0;
  position: relative;
  overflow: hidden;
}

.scene {
  width: 100%;
  height: 100%;
}

.planes path {
  fill: #99663314;
  stroke: #996633;
  shape-rendering: crispEdges;
}

.planes .top {
  fill: #f7f4f0;
}

.cad {
  font: 15px/16px "Liberation Sans", sans-serif;
}

.brown {
  fill: #996633;
}

.num {
  font: 15px/16px "Liberation Mono", monospace;
  fill: #00e;
}

.dimline path {
  fill: none;
  stroke: #00e;
}

.dimline path[fill] {
  fill: #00e;
}

.swing {
  fill: none;
  stroke: #900;
  stroke-dasharray: 7 8;
}

.viewbar {
  position: absolute;
  left: 325px;
  top: 7px;
  height: 32px;
  display: flex;
  align-items: center;
  gap: 2px;
  padding: 0 3px;
  border: 1px solid #a8a8a8;
  background: #f8f9fc;
}

.viewbar button {
  width: 24px;
  height: 24px;
  padding: 3px;
}

.viewbar .pressed {
  padding: 2px;
}

.dialog {
  position: absolute;
  left: 5px;
  top: 61px;
  width: 238px;
  padding-bottom: 12px;
  border: 1px solid #cfd2d3;
  background: #fbfbfb;
}

.dialog header {
  height: 30px;
  display: flex;
  align-items: center;
  gap: 8px;
  padding: 0 9px 0 30px;
  background: #e7e8ea;
  color: #999;
}

.dialog header span {
  flex: 1;
  padding-left: 18px;
  text-align: center;
}

.dir {
  padding: 7px 12px 0;
}

.dir h3 {
  margin-bottom: 2px;
}

.table-box {
  height: 115px;
  padding: 1px;
  border: 1px solid #a8acae;
  background: #fff;
}

.dir table {
  width: 100%;
  height: 100%;
  border-collapse: collapse;
  background: #f4f1ff;
}

.dir th {
  width: 109px;
  height: 23px;
  padding: 3px 5px 0;
  border-right: 1px solid #cfd2d3;
  border-bottom: 1px solid #cfd2d3;
  background: #fbfbfb;
  text-align: left;
  font-weight: normal;
  color: #222;
}

.dir th + th {
  width: auto;
  border-right-width: 2px;
}

.dir td {
  padding: 2px 15px;
  vertical-align: top;
}

.dir label {
  display: flex;
  align-items: center;
  gap: 2px;
  margin: 6px 0 4px 2px;
}

.dir input {
  width: 12px;
  height: 12px;
  margin: 0;
  appearance: none;
  border: 1px solid #d6d8d9;
  background: #fff;
}

.dir button {
  width: 44px;
  height: 25px;
  margin-bottom: 4px;
  border: 1px solid #cfd2d3;
  background: #eeeff0;
  color: #aaa;
}

.mark {
  position: absolute;
  right: 18px;
  bottom: 7px;
  width: 168px;
  white-space: nowrap;
}

.mark-name {
  font: italic 400 41px/50px "Noto Sans CJK SC", sans-serif;
  color: #000;
}

.mark-name b {
  font-weight: 400;
  color: #ff6a33;
}

.mark-url {
  padding-left: 2px;
  font: italic 17px/18px "Liberation Sans", sans-serif;
  color: #999;
}

.mark svg {
  position: absolute;
  left: 61px;
  top: -9px;
}
```
